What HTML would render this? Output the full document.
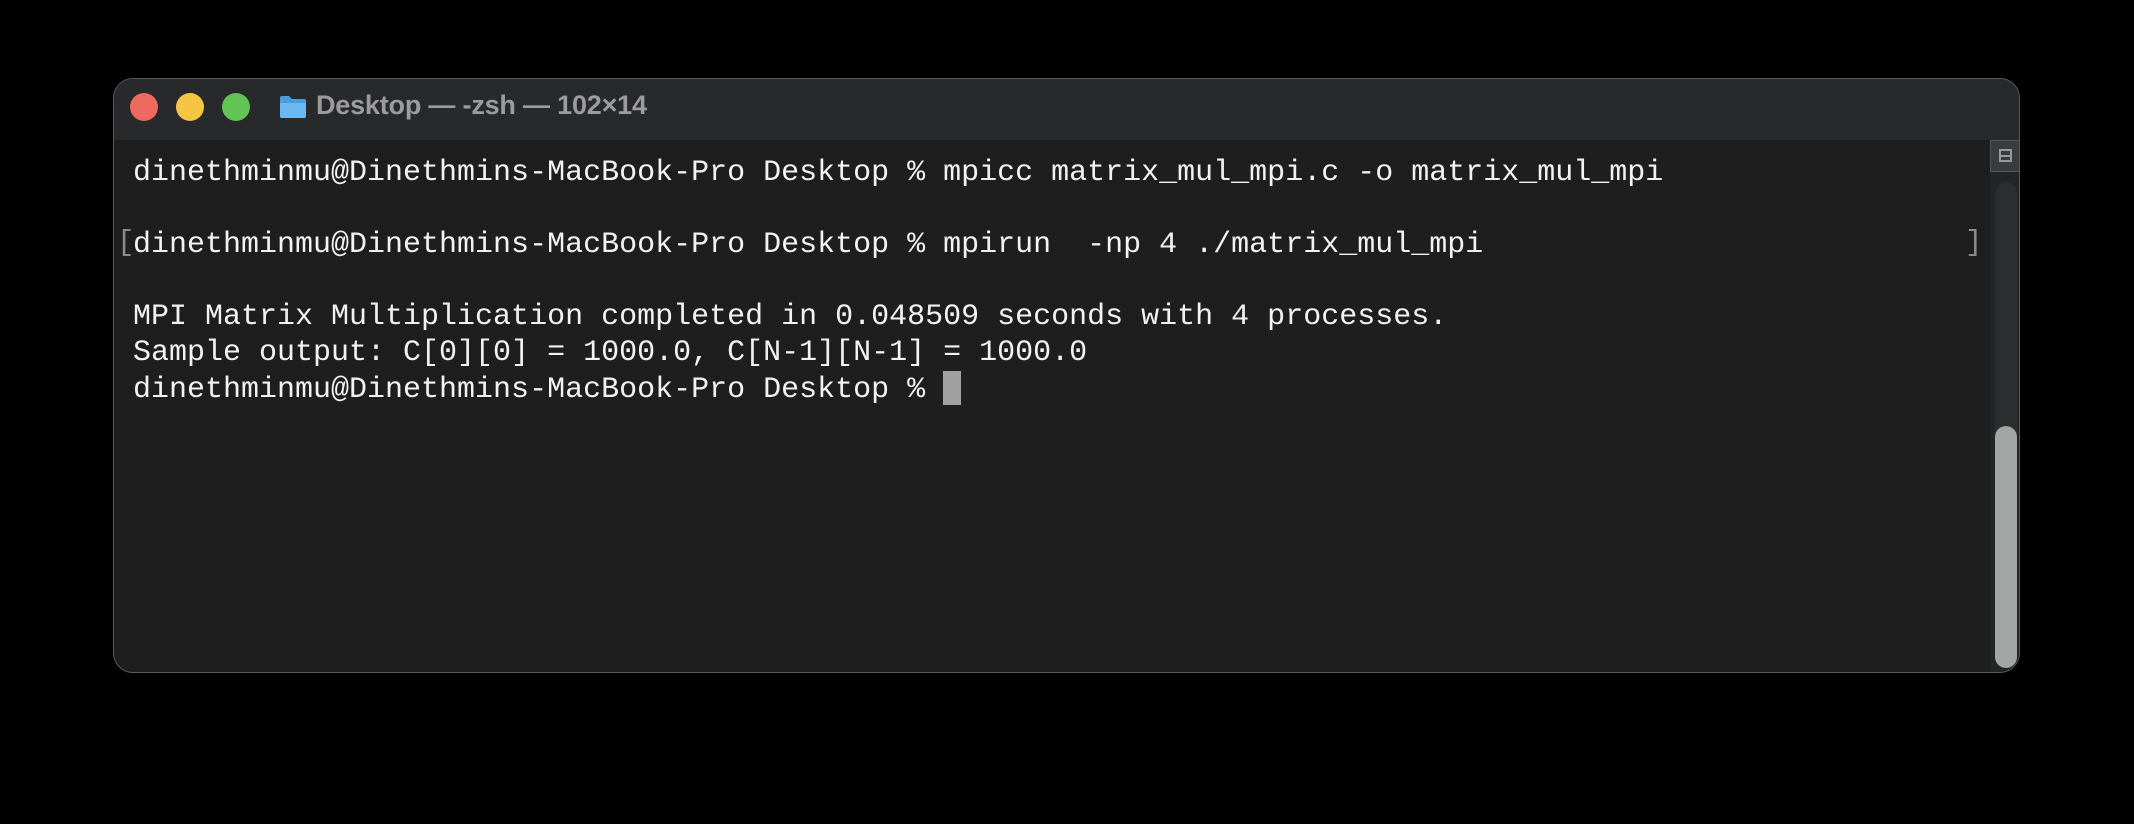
<!DOCTYPE html>
<html><head><meta charset="utf-8"><style>
html,body{margin:0;padding:0;background:#000;width:2134px;height:824px;overflow:hidden}
.win{position:absolute;left:113px;top:78px;width:1907px;height:595px;border-radius:20px;background:#1e1e1e;border:1.5px solid #5a5a5c;overflow:hidden;box-sizing:border-box}
.tb{position:absolute;left:0;top:0;right:0;height:61px;background:#28292b}
.dot{position:absolute;top:14px;width:28px;height:28px;border-radius:50%}
.title{position:absolute;left:202px;top:11px;font:bold 27px "Liberation Sans",sans-serif;color:#9c9c9e;white-space:nowrap;letter-spacing:-0.2px}
.txt{position:absolute;left:19px;top:76px;font:30px/36.1px "Liberation Mono",monospace;color:#f2f2f2;white-space:pre}
.br{position:absolute;font:29px "Liberation Mono",monospace;color:#8a8a8a}
.sc{position:absolute;left:1876px;top:61px;width:31px;bottom:0;background:#232425}
.tog{position:absolute;left:1876px;top:61px;width:31px;height:32px;background:#3a3b3d;border:1px solid #555;box-sizing:border-box}
.track{position:absolute;left:1881px;top:103px;width:22px;bottom:4px;border-radius:11px;background:#2c2d2f}
.thumb{position:absolute;left:1881px;top:347px;width:22px;bottom:4px;border-radius:11px;background:#a4a6a5}
.cur{position:absolute;left:829px;top:292px;width:18px;height:34px;background:#a0a0a0}
</style></head><body>
<div class="win">
 <div class="tb"></div>
 <div class="dot" style="left:16px;background:#ee6a5f"></div>
 <div class="dot" style="left:62px;background:#f5c644"></div>
 <div class="dot" style="left:108px;background:#61c454"></div>
 <svg style="position:absolute;left:165px;top:16px" width="28" height="24" viewBox="0 0 28 24"><path d="M1 3a2 2 0 0 1 2-2h7l3 3h12a2 2 0 0 1 2 2v15a2 2 0 0 1-2 2H3a2 2 0 0 1-2-2z" fill="#4a9ee0"/><path d="M1 8h26v13a2 2 0 0 1-2 2H3a2 2 0 0 1-2-2z" fill="#6cb8f0"/></svg>
 <div class="title">Desktop — -zsh — 102×14</div>
 <div class="txt">dinethminmu@Dinethmins-MacBook-Pro Desktop % mpicc matrix_mul_mpi.c -o matrix_mul_mpi

dinethminmu@Dinethmins-MacBook-Pro Desktop % mpirun  -np 4 ./matrix_mul_mpi

MPI Matrix Multiplication completed in 0.048509 seconds with 4 processes.
Sample output: C[0][0] = 1000.0, C[N-1][N-1] = 1000.0
dinethminmu@Dinethmins-MacBook-Pro Desktop % </div>
 <div class="br" style="left:3px;top:147px">[</div>
 <div class="br" style="left:1851px;top:147px">]</div>
 <div class="cur"></div>
 <div class="sc"></div>
 <div class="tog"><div style="position:absolute;left:8px;top:8px;width:13px;height:13px;border:2px solid #999;box-sizing:border-box"></div><div style="position:absolute;left:8px;top:14px;width:13px;height:2px;background:#999"></div></div>
 <div class="track"></div>
 <div class="thumb"></div>
</div>
</body></html>
